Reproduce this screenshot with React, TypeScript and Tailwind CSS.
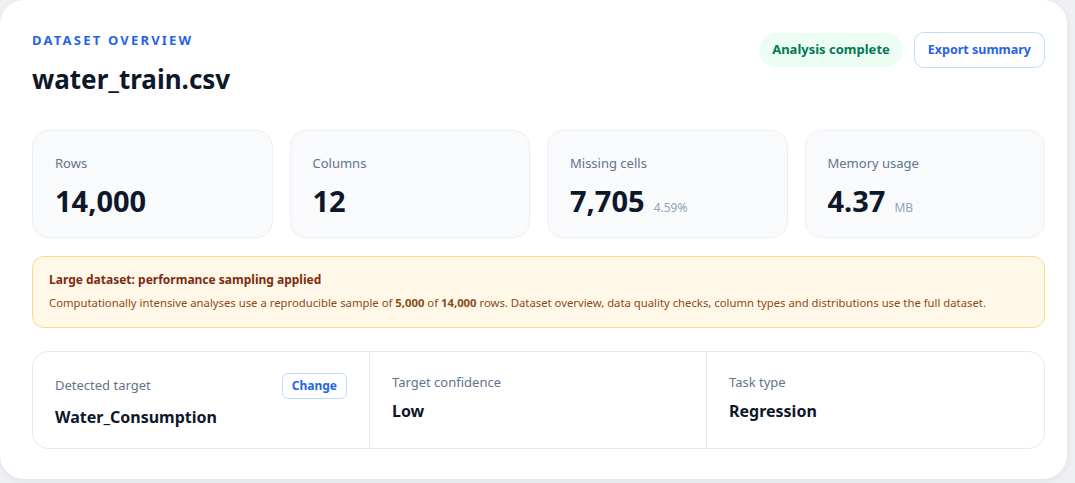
import React from 'react'

type Stat = {
   label: string
   value: string
   suffix?: string
}

const stats: Stat[] = [
   { label: 'Rows', value: '14,000' },
   { label: 'Columns', value: '12' },
   { label: 'Missing cells', value: '7,705', suffix: '4.59%' },
   { label: 'Memory usage', value: '4.37', suffix: 'MB' },
]

const StatCard: React.FC<{ stat: Stat }> = ({ stat }) => (
   <div className="flex h-[108px] flex-col rounded-2xl border border-[#eceff3] bg-[#f8fafc] px-[22px] pt-[24px]">
      <span className="text-[13px] leading-4 text-[#64748b]">{stat.label}</span>
      <div className="mt-[14px] flex items-baseline gap-[9px]">
         <span className="text-[29px] font-bold leading-8 text-[#0f172a]">{stat.value}</span>
         {stat.suffix && <span className="text-[12px] text-[#94a3b8]">{stat.suffix}</span>}
      </div>
   </div>
)

const InfoCell: React.FC<{
   label: string
   value: string
   action?: React.ReactNode
   last?: boolean
}> = ({ label, value, action, last }) => (
   <div className={`flex flex-col px-[22px] ${action ? 'pt-[21px]' : 'pt-[18px]'} ${last ? '' : 'border-r border-[#e5e7eb]'}`}>
      <div className="flex h-[26px] items-center justify-between">
         <span className="text-[13px] text-[#64748b]">{label}</span>
         {action}
      </div>
      <span className={`${action ? 'mt-[8px]' : 'mt-[5px]'} text-[16px] font-bold leading-5 text-[#0f172a]`}>
         {value}
      </span>
   </div>
)

export default function App() {
   return (
      <div
         className="h-[483px] w-[1075px] overflow-hidden bg-[#eef0f4]"
         style={{ fontFamily: '"Noto Sans", "Open Sans", sans-serif' }}
      >
         <div className="h-[479px] w-[1067px] rounded-[24px] bg-white pl-8 pr-[22px] pt-8 shadow-[0_2px_8px_rgba(15,23,42,0.06)]">
            <header className="flex items-start justify-between">
               <div className="flex flex-col">
                  <span className="text-[13px] font-bold uppercase leading-4 tracking-[0.17em] text-[#2563eb]">
                     Dataset overview
                  </span>
                  <h1 className="mt-[15px] text-[26px] font-bold leading-8 text-[#0f172a]">water_train.csv</h1>
               </div>
               <div className="flex items-center gap-[11px]">
                  <span className="flex h-[34px] items-center rounded-full bg-[#ecfdf3] px-[13px] text-[13px] font-bold text-[#047857]">
                     Analysis complete
                  </span>
                  <button className="flex h-[36px] items-center rounded-[10px] border border-[#bfdbfe] bg-white px-[13px] text-[12.5px] font-bold text-[#2563eb]">
                     Export summary
                  </button>
               </div>
            </header>

            <section className="mt-[35px] grid grid-cols-4 gap-[17px]">
               {stats.map((s) => (
                  <StatCard key={s.label} stat={s} />
               ))}
            </section>

            <section className="mt-[18px] rounded-xl border border-[#fcd98a] bg-[#fff8e8] px-4 pb-[16px] pt-[15px]">
               <p className="text-[12px] font-bold leading-4 text-[#7c2d12]">
                  Large dataset: performance sampling applied
               </p>
               <p className="mt-[7px] text-[11.3px] leading-4 text-[#8a4b16]">
                  Computationally intensive analyses use a reproducible sample of <b>5,000</b> of{' '}
                  <b>14,000</b> rows. Dataset overview, data quality checks, column types and distributions use
                  the full dataset.
               </p>
            </section>

            <section className="mt-[23px] grid h-[98px] grid-cols-3 rounded-2xl border border-[#e5e7eb]">
               <InfoCell
                  label="Detected target"
                  value="Water_Consumption"
                  action={
                     <button className="flex h-[26px] items-center rounded-md border border-[#bfdbfe] px-[9px] text-[12px] font-bold text-[#2563eb]">
                        Change
                     </button>
                  }
               />
               <InfoCell label="Target confidence" value="Low" />
               <InfoCell label="Task type" value="Regression" last />
            </section>
         </div>
      </div>
   )
}
